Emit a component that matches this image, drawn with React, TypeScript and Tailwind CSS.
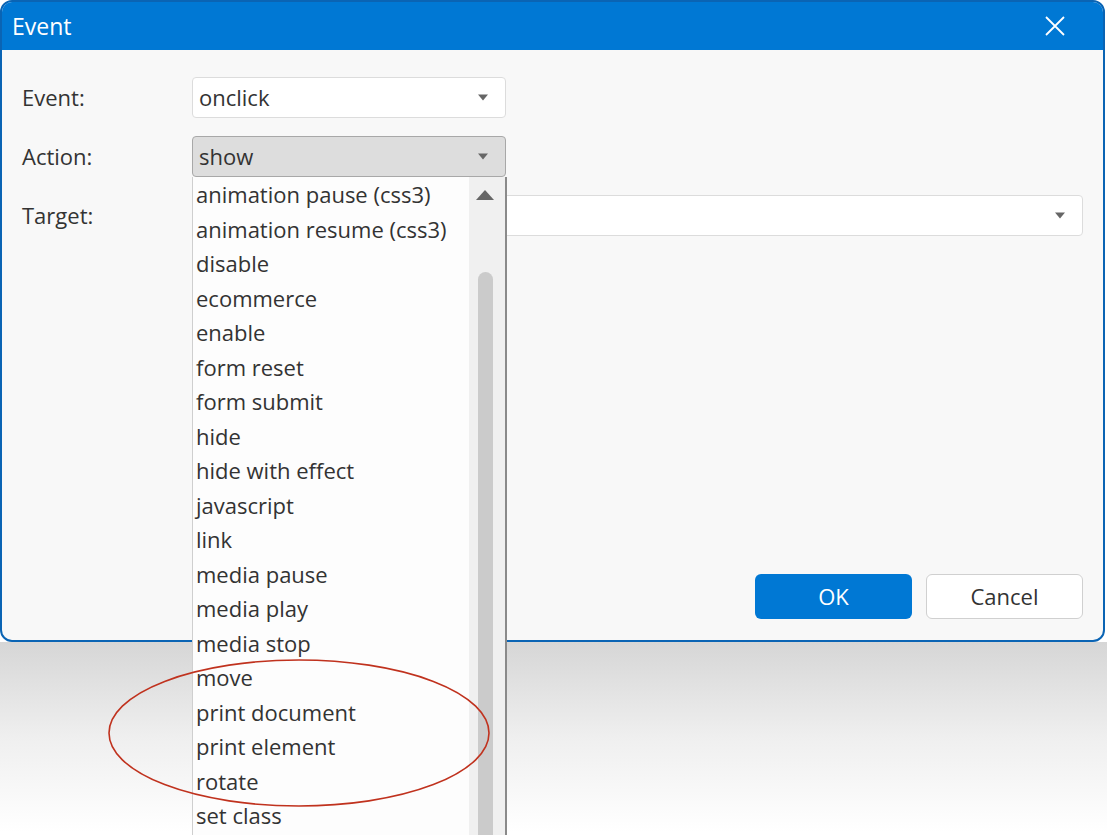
import React from "react";

const ACTIONS = [
  "animation pause (css3)",
  "animation resume (css3)",
  "disable",
  "ecommerce",
  "enable",
  "form reset",
  "form submit",
  "hide",
  "hide with effect",
  "javascript",
  "link",
  "media pause",
  "media play",
  "media stop",
  "move",
  "print document",
  "print element",
  "rotate",
  "set class",
];

function Caret() {
  return (
    <svg width="12" height="7" viewBox="0 0 12 7" className="shrink-0">
      <path d="M1 0.5 L11 0.5 L6 6.5 Z" fill="#666" />
    </svg>
  );
}

function Select({ value, active, className = "" }: { value: string; active?: boolean; className?: string }) {
  return (
    <div
      className={`flex h-[41px] items-center justify-between rounded-[4px] border pl-[6px] pr-[16px] text-[22px] text-[#333] ${
        active ? "border-[#a8a8a8] bg-[#dddddd]" : "border-[#dcdcdc] bg-white"
      } ${className}`}
    >
      <span>{value}</span>
      <Caret />
    </div>
  );
}

export default function App() {
  return (
    <div
      className="relative flex h-[835px] w-[1107px] flex-col overflow-hidden bg-white"
      style={{ fontFamily: '"Open Sans", "Noto Sans", Arial, sans-serif' }}
    >
      {/* Dialog */}
      <div className="flex h-[642px] w-[1105px] shrink-0 flex-col overflow-hidden rounded-[12px] border-2 border-[#0a64b4] bg-[#f8f8f8]">
        <div className="flex h-[48px] shrink-0 items-center justify-between bg-[#0078d4] pl-[10px] pr-[38px]">
          <span className="text-[23px] text-white">Event</span>
          <svg width="20" height="20" viewBox="0 0 20 20">
            <path d="M1 1 L19 19 M19 1 L1 19" stroke="white" strokeWidth="1.8" />
          </svg>
        </div>

        <div className="flex flex-1 flex-col px-[20px] pt-[27px]">
          <div className="flex items-center">
            <span className="w-[170px] text-[22px] text-[#333]">Event:</span>
            <Select value="onclick" className="w-[314px]" />
          </div>
          <div className="mt-[18px] flex items-center">
            <span className="w-[170px] text-[22px] text-[#333]">Action:</span>
            <Select value="show" active className="w-[314px]" />
          </div>
          <div className="mt-[18px] flex items-center">
            <span className="w-[170px] text-[22px] text-[#333]">Target:</span>
            <Select value="" className="flex-1" />
          </div>

          <div className="mt-auto mb-[21px] flex justify-end gap-[14px]">
            <button className="h-[45px] w-[157px] rounded-[6px] bg-[#0078d4] text-[22px] text-white">OK</button>
            <button className="h-[45px] w-[157px] rounded-[6px] border border-[#d0d0d0] bg-white text-[22px] text-[#333]">
              Cancel
            </button>
          </div>
        </div>
      </div>

      {/* Drop shadow below the dialog */}
      <div className="h-[190px] w-full bg-gradient-to-b from-[#d6d6d6] via-[#efefef] to-white" />

      {/* Open dropdown list */}
      <div className="absolute left-[192px] top-[177px] flex h-[680px] w-[315px] border-l border-[#cfcfcf] border-r-2 border-r-[#8a8a8a] bg-[#fdfdfd]">
        <div className="flex flex-1 flex-col pl-[3px]">
          {ACTIONS.map((a) => (
            <div key={a} className="flex h-[34.5px] shrink-0 items-center whitespace-nowrap text-[22px] leading-none text-[#333]">
              {a}
            </div>
          ))}
        </div>
        <div className="flex w-[36px] flex-col items-center bg-[#f0f0f0] pr-[4px]">
          <svg width="20" height="12" viewBox="0 0 20 12" className="mt-[12px]">
            <path d="M1 11 L10 1 L19 11 Z" fill="#666" />
          </svg>
          <div className="mt-[71px] w-[15px] flex-1 rounded-t-[8px] bg-[#cbcbcb]" />
        </div>
      </div>

      {/* Annotation ellipse */}
      <svg className="pointer-events-none absolute left-0 top-0" width="1107" height="835">
        <ellipse cx="299" cy="733" rx="190" ry="73" fill="none" stroke="#c0321e" strokeWidth="1.6" />
      </svg>
    </div>
  );
}
